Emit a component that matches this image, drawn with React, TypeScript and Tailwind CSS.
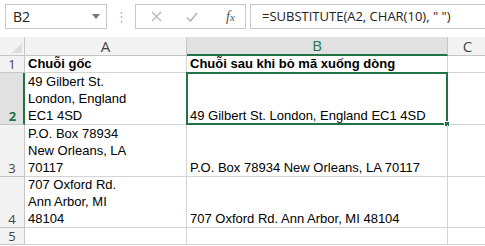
import React from "react";

const cellFont = { fontFamily: '"Liberation Sans", Arial, sans-serif' };
const uiFont = { fontFamily: '"Open Sans", "Noto Sans", sans-serif' };

type Row = { num: string; a: string[]; b: string; h: string };

const rows: Row[] = [
    { num: "2", a: ["49 Gilbert St.", "London, England", "EC1 4SD"], b: "49 Gilbert St. London, England EC1 4SD", h: "h-[52px]" },
    { num: "3", a: ["P.O. Box 78934", "New Orleans, LA", "70117"], b: "P.O. Box 78934 New Orleans, LA 70117", h: "h-[52px]" },
    { num: "4", a: ["707 Oxford Rd.", "Ann Arbor, MI", "48104"], b: "707 Oxford Rd. Ann Arbor, MI 48104", h: "h-[51px]" },
];

const FormulaBar: React.FC = () => (
    <div className="flex items-center h-[37px] pt-[4px] pb-[8px] pl-[5px] bg-white" style={uiFont}>
        <div className="flex items-center justify-between w-[102px] h-[25px] border border-[#c6c6c6] pl-[7px] pr-[6px] text-[14px] text-[#222]">
            <span>B2</span>
            <svg width="8" height="5" viewBox="0 0 8 5"><path d="M0 0h8L4 5z" fill="#777" /></svg>
        </div>
        <div className="w-[28px] flex justify-center text-[#bbb] text-[13px] leading-none">⋮</div>
        <div className="flex items-center w-[111px] h-[25px] border border-[#c6c6c6]">
            <svg className="ml-[15px]" width="11" height="11" viewBox="0 0 11 11">
                <path d="M1 1l9 9M10 1l-9 9" stroke="#b4b4b4" strokeWidth="1.3" />
            </svg>
            <svg className="ml-[24px]" width="12" height="10" viewBox="0 0 12 10">
                <path d="M1 5.5l3.5 3.5L11 1" stroke="#b4b4b4" strokeWidth="1.5" fill="none" />
            </svg>
            <span className="ml-[28px] text-[14px] italic text-[#555]" style={{ fontFamily: '"Liberation Serif", serif' }}>
                f<span className="text-[11px]">x</span>
            </span>
        </div>
        <div className="flex-1 ml-[4px] h-[25px] border-y border-l border-[#c6c6c6] pl-[11px] flex items-center text-[13px] text-[#222] whitespace-nowrap">
            =SUBSTITUTE(A2, CHAR(10), " ")
        </div>
    </div>
);

const App: React.FC = () => {
    return (
        <div className="w-[485px] h-[246px] bg-white overflow-hidden">
            <FormulaBar />

            {/* column headers */}
            <div className="flex h-[19px] text-[15px] text-[#444]" style={uiFont}>
                <div className="w-[25px] bg-[#f3f3f3] border-r border-b border-[#c6c6c6] flex items-end justify-end pr-[2px] pb-[2px]">
                    <svg width="10" height="10" viewBox="0 0 10 10"><path d="M10 0v10H0z" fill="#dcdcdc" /></svg>
                </div>
                <div className="w-[162px] bg-[#f3f3f3] border-r border-b border-[#c6c6c6] flex items-center justify-center leading-none">A</div>
                <div className="w-[261px] bg-[#e1e1e1] border-r border-[#c6c6c6] border-b-2 border-b-[#217346] flex items-center justify-center leading-none text-[#217346]">B</div>
                <div className="flex-1 bg-[#f3f3f3] border-b border-[#c6c6c6] flex items-center justify-center leading-none pl-[2px]">C</div>
            </div>

            <div className="text-[13px] leading-[17px] text-black" style={cellFont}>
                {/* row 1 */}
                <div className="flex h-[17px]">
                    <div className="w-[25px] bg-[#f3f3f3] border-r border-b border-[#c6c6c6] flex items-end justify-center text-[13px] leading-[16px] text-[#444]" style={uiFont}>1</div>
                    <div className="w-[162px] border-r border-b border-[#d4d4d4] px-[3px] font-bold whitespace-nowrap flex items-end">Chuỗi gốc</div>
                    <div className="w-[261px] border-r border-b border-[#d4d4d4] px-[3px] font-bold whitespace-nowrap flex items-end">Chuỗi sau khi bỏ mã xuống dòng</div>
                    <div className="flex-1 border-b border-[#d4d4d4]" />
                </div>

                {rows.map((r, i) => {
                    const selected = i === 0;
                    return (
                        <div key={r.num} className={`flex ${r.h}`}>
                            <div
                                className={
                                    selected
                                        ? "w-[25px] bg-[#e1e1e1] border-r-2 border-r-[#217346] border-b border-[#c6c6c6] flex items-end justify-center pl-[2px] text-[13px] leading-[16px] font-bold text-[#217346]"
                                        : "w-[25px] bg-[#f3f3f3] border-r border-b border-[#c6c6c6] flex items-end justify-center text-[13px] leading-[16px] text-[#444]"
                                }
                                style={uiFont}
                            >
                                {r.num}
                            </div>
                            <div className="w-[162px] border-r border-b border-[#d4d4d4] px-[3px] flex flex-col justify-end whitespace-nowrap">
                                {r.a.map(line => (
                                    <div key={line}>{line}</div>
                                ))}
                            </div>
                            <div className="relative w-[261px] border-r border-b border-[#d4d4d4] px-[3px] flex items-end whitespace-nowrap">
                                {r.b}
                                {selected && (
                                    <div className="absolute -left-[1px] -top-[1px] -right-[1px] -bottom-[1px] border-2 border-[#217346]">
                                        <div className="absolute -right-[4px] -bottom-[4px] w-[6px] h-[6px] bg-[#217346] border border-white" />
                                    </div>
                                )}
                            </div>
                            <div className="flex-1 border-b border-[#d4d4d4]" />
                        </div>
                    );
                })}

                {/* row 5 */}
                <div className="flex h-[17px]">
                    <div className="w-[25px] bg-[#f3f3f3] border-r border-b border-[#c6c6c6] flex items-end justify-center text-[13px] leading-[16px] text-[#444]" style={uiFont}>5</div>
                    <div className="w-[162px] border-r border-b border-[#d4d4d4]" />
                    <div className="w-[261px] border-r border-b border-[#d4d4d4]" />
                    <div className="flex-1 border-b border-[#d4d4d4]" />
                </div>
            </div>
        </div>
    );
};

export default App;
